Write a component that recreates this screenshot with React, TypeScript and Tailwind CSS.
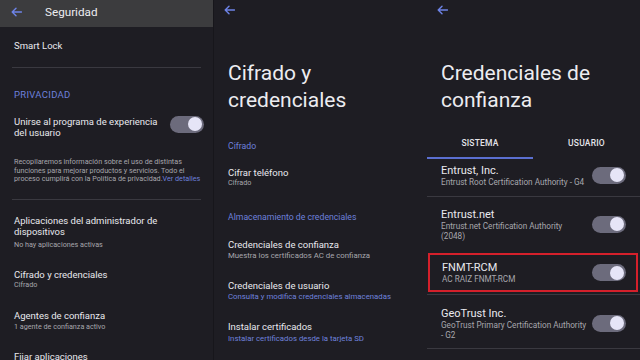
import React from "react";

const BG = "bg-[#1e1d23]";

function Arrow() {
  return (
    <svg width="11" height="10" viewBox="0 0 11 10" fill="none">
      <path d="M10.5 5H1.2M5 1.2L1.2 5L5 8.8" stroke="#6d83e6" strokeWidth="1.4" strokeLinecap="round" strokeLinejoin="round" />
    </svg>
  );
}

function Toggle() {
  return (
    <div className="w-[34px] h-[17px] rounded-full bg-[#6c6b7c] flex items-center justify-end pr-[2px] shrink-0">
      <div className="w-[14px] h-[14px] rounded-full bg-[#e6e5f7]" />
    </div>
  );
}

const T = "text-[9.5px] leading-[11px] text-[#e9e9ee]";
const S = "text-[7.2px] leading-[9px] text-[#a7a7ad]";
const SB = "text-[7.2px] leading-[9px] text-[#6f82de]";
const H = "text-[8.7px] leading-[11px] text-[#6d80dc]";

function Divider({ mt }: { mt: string }) {
  return <div className={`${mt} mx-[12px] h-px bg-[#3a3940] shrink-0`} />;
}

function Panel1() {
  return (
    <div className={`w-[213px] h-[360px] ${BG} flex flex-col overflow-hidden`}>
      <div className="h-[27px] bg-[#3c3c3e] flex items-start pt-[5px] shrink-0">
        <div className="pl-[11px] w-[45px] h-[14px] flex items-center"><Arrow /></div>
        <div className="text-[11.7px] leading-[14px] text-[#ececf0]">Seguridad</div>
      </div>
      <div className={`mt-[13px] pl-[14px] ${T} leading-[12px]`}>Smart Lock</div>
      <Divider mt="mt-[15px]" />
      <div className="mt-[20.8px] pl-[14px] text-[9.5px] leading-[11px] text-[#6d80dc] tracking-[0.3px]">PRIVACIDAD</div>
      <div className="mt-[16.2px] pl-[14px] pr-[9px] flex items-start justify-between">
        <div className={T}>
          Unirse al programa de experiencia
          <br />
          del usuario
        </div>
        <Toggle />
      </div>
      <div className="mt-[20.5px] pl-[14px] text-[7.2px] leading-[8.3px] text-[#a7a7ad] whitespace-nowrap">
        Recopilaremos información sobre el uso de distintas
        <br />
        funciones para mejorar productos y servicios. Todo el
        <br />
        proceso cumplirá con la Política de privacidad.<span className="text-[#6d80dc]">Ver detalles</span>
      </div>
      <Divider mt="mt-[15.5px]" />
      <div className="mt-[15.5px] pl-[14px]">
        <div className={T}>
          Aplicaciones del administrador de
          <br />
          dispositivos
        </div>
        <div className={`${S} mt-[2.3px]`}>No hay aplicaciones activas</div>
      </div>
      <div className="mt-[20px] pl-[14px]">
        <div className={T}>Cifrado y credenciales</div>
        <div className={`${S} mt-[0.7px]`}>Cifrado</div>
      </div>
      <div className="mt-[20.7px] pl-[14px]">
        <div className={T}>Agentes de confianza</div>
        <div className={`${S} mt-[1.3px]`}>1 agente de confianza activo</div>
      </div>
      <div className={`mt-[20px] pl-[14px] ${T}`}>Fijar aplicaciones</div>
    </div>
  );
}

function BigTitle({ a, b }: { a: string; b: string }) {
  return (
    <div className="mt-[40px] pl-[14px] text-[21px] leading-[27px] text-[#ececf0] shrink-0">
      {a}
      <br />
      {b}
    </div>
  );
}

function Panel2() {
  return (
    <div className={`w-[213px] h-[360px] ${BG} flex flex-col overflow-hidden`}>
      <div className="h-[20px] pl-[10px] flex items-center shrink-0"><Arrow /></div>
      <BigTitle a="Cifrado y" b="credenciales" />
      <div className={`mt-[26.8px] pl-[14px] ${H}`}>Cifrado</div>
      <div className="mt-[15.4px] pl-[14px]">
        <div className={T}>Cifrar teléfono</div>
        <div className={`${S} mt-[0.3px]`}>Cifrado</div>
      </div>
      <div className={`mt-[24.7px] pl-[14px] ${H}`}>Almacenamiento de credenciales</div>
      <div className="mt-[15.6px] pl-[14px]">
        <div className={T}>Credenciales de confianza</div>
        <div className={`${S} text-[7.8px] mt-[1px]`}>Muestra los certificados AC de confianza</div>
      </div>
      <div className="mt-[20px] pl-[14px]">
        <div className={T}>Credenciales de usuario</div>
        <div className={`${SB} text-[7.8px] mt-[1.4px]`}>Consulta y modifica credenciales almacenadas</div>
      </div>
      <div className="mt-[20.3px] pl-[14px]">
        <div className={T}>Instalar certificados</div>
        <div className={`${SB} text-[7.8px] mt-[1.3px]`}>Instalar certificados desde la tarjeta SD</div>
      </div>
    </div>
  );
}

function CertText({ title, lines }: { title: string; lines: string[] }) {
  return (
    <div className="w-[150px] whitespace-nowrap">
      <div className="text-[11px] leading-[13px] text-[#e9e9ee]">{title}</div>
      {lines.map((l) => (
        <div key={l} className="text-[8.2px] leading-[10px] text-[#a7a7ad]">{l}</div>
      ))}
    </div>
  );
}

function Cert({ title, lines, mt }: { title: string; lines: string[]; mt: string }) {
  return (
    <div className={`${mt} flex items-center justify-between pl-[14px] pr-[14px] shrink-0`}>
      <CertText title={title} lines={lines} />
      <Toggle />
    </div>
  );
}

function Panel3() {
  return (
    <div className={`w-[213px] h-[360px] ${BG} flex flex-col overflow-hidden`}>
      <div className="h-[20px] pl-[10px] flex items-center shrink-0"><Arrow /></div>
      <BigTitle a="Credenciales de" b="confianza" />
      <div className="mt-[24px] flex text-[8.5px] leading-[10px] font-medium text-[#e4e4ea] tracking-[0.2px] shrink-0">
        <div className="w-[106px] text-center">SISTEMA</div>
        <div className="w-[107px] text-center">USUARIO</div>
      </div>
      <div className="mt-[8.5px] w-[106px] h-[2px] bg-[#5b6fd0] shrink-0" />
      <Cert mt="mt-[5px]" title="Entrust, Inc." lines={["Entrust Root Certification Authority - G4"]} />
      <div className="mt-[9.5px] h-px bg-[#3a3940] shrink-0" />
      <Cert mt="mt-[10.5px]" title="Entrust.net" lines={["Entrust.net Certification Authority", "(2048)"]} />
      <div className="mt-[12.5px] ml-[1px] mr-[2px] h-[39px] border-2 border-[#d4202b] flex items-center justify-between pl-[12px] pr-[10px] shrink-0">
        <CertText title="FNMT-RCM" lines={["AC RAIZ FNMT-RCM"]} />
        <Toggle />
      </div>
      <div className="mt-[2px] h-px bg-[#3a3940] shrink-0" />
      <Cert mt="mt-[11.5px]" title="GeoTrust Inc." lines={["GeoTrust Primary Certification Authority", "- G2"]} />
      <div className="mt-[8.5px] h-px bg-[#3a3940] shrink-0" />
    </div>
  );
}

export default function App() {
  return (
    <div className="w-[640px] h-[360px] flex bg-[#17161b] overflow-hidden" style={{ fontFamily: "Roboto, 'Noto Sans', sans-serif" }}>
      <Panel1 />
      <div className="w-px bg-[#17161b]" />
      <Panel2 />
      <Panel3 />
    </div>
  );
}
